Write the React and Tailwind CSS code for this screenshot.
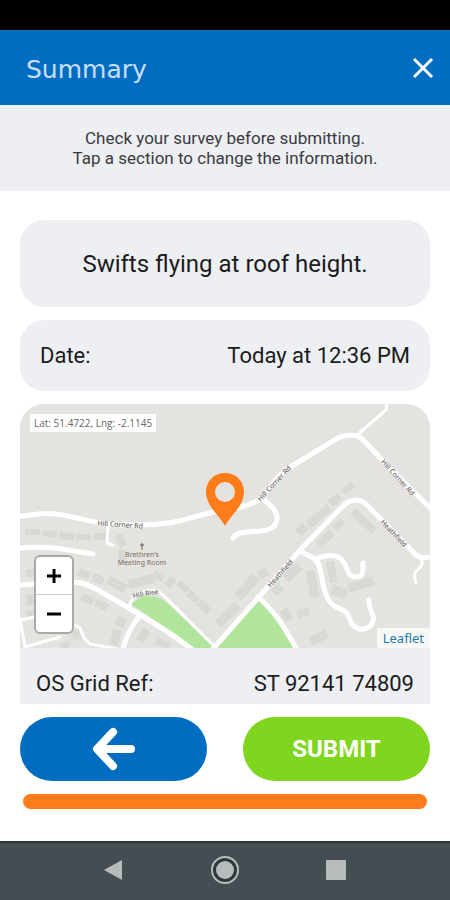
import { useState } from 'react';

const minorRoads = [
  'M337 31 L366 6 L367 -2',
  'M88 122 L87 139 L93 141',
  'M109 203 C111 196 114 191 123 188 C131 185 138 186 143 191 L193 241',
  'M0 216 L15 213 L55 221 L60 224 L64 234 L70 240 L97 245',
  'M0 216 L5 243 L40 233',
  'M402 156 C403 165 397 164 395 169 C394 173 395 176 396 179',
];

const mainRoads = [
  'M-2 112 C12 112 20 108 36 110 C60 113 75 122 123 121 C155 121 170 113 190 109 C215 104 230 103 241 94 C252 82 257 70 272 62 L313 37 C321 31 334 29 341 34 C350 42 355 49 362 56 L413 107',
  'M242 94 C250 101 258 107 257 116 C255 128 240 127 225 128 C219 129 215 130 213 134',
  'M193 245 L238 194 L280 146 L323 102 C330 95 341 94 347 101 L395 150 C400 155 405 154 413 152',
  'M280 147 L295 155 C303 162 300 180 308 195 C314 207 325 202 329 213 C332 224 341 229 350 222 C359 213 348 208 349 196',
  'M296 156 C302 151 313 150 320 154 C329 160 325 173 336 173 C344 173 343 166 343 159',
  'M-2 181 C18 180 35 179 53 178 C62 178 69 181 76 185 L107 203 L140 223 C155 232 162 238 173 246',
  'M238 193 C256 209 265 224 277 246',
  'M-2 144 C15 143 30 143 42 145 L73 150',
  'M118 214 C111 223 106 232 103 245',
];

// x, y, width, height, rotation
const buildings = [
  [5, 125, 15, 6, 2], [23, 127, 14, 6, 5], [39, 129, 15, 7, 5], [56, 130, 15, 6, 6], [74, 129, 14, 7, -2],
  [97, 130, 8, 13, -25], [98, 146, 8, 14, 3],
  [6, 165, 8, 8, 0], [58, 166, 12, 8, 22], [72, 171, 12, 8, 26], [87, 176, 20, 9, 28],
  [6, 190, 9, 12, 0], [6, 206, 12, 8, 0], [61, 191, 13, 8, 25], [75, 197, 13, 8, 25],
  [108, 173, 26, 9, -14], [133, 168, 11, 8, 20], [145, 174, 11, 8, -48],
  [157, 179, 12, 7, 40], [167, 189, 12, 7, 42], [177, 199, 14, 8, 44],
  [196, 211, 13, 9, -46], [205, 202, 15, 9, -46], [213, 178, 28, 10, -47], [238, 165, 10, 9, -40],
  [252, 181, 11, 9, -42], [263, 164, 19, 9, -42], [96, 213, 10, 10, -65], [88, 229, 15, 9, -75],
  [117, 227, 13, 9, -55], [136, 235, 14, 8, 22], [277, 121, 10, 9, -44], [285, 108, 28, 8, -42],
  [309, 92, 12, 8, -40], [322, 81, 13, 7, -40], [296, 131, 18, 8, -42], [313, 117, 11, 7, -42],
  [329, 113, 29, 8, 43], [308, 157, 8, 22, -12], [288, 166, 9, 28, -10], [311, 183, 16, 10, 20],
  [328, 176, 26, 9, -17], [262, 205, 9, 12, -30], [277, 205, 12, 8, -20], [290, 229, 18, 9, -25],
  [40, 238, 10, 6, -20], [52, 226, 8, 10, -20],
];

const roadLabels = [
  { text: 'Hill Corner Rd', x: 100, y: 123, rotate: 4 },
  { text: 'Hill Corner Rd', x: 256, y: 81, rotate: -47 },
  { text: 'Hill Corner Rd', x: 376, y: 75, rotate: 48 },
  { text: 'Heathfield', x: 372, y: 131, rotate: 47 },
  { text: 'Heathfield', x: 262, y: 171, rotate: -48 },
  { text: 'Hill Rise', x: 126, y: 192, rotate: -10 },
];

const MapTiles = () => (
  <svg
    viewBox="0 0 410 244"
    preserveAspectRatio="xMidYMid slice"
    className="block w-full h-61 bg-[#e4e3df]"
    aria-label="Map of the survey location"
  >
    <g fill="#dad8d4">
      {buildings.map(([x, y, w, h, r], i) => (
        <rect key={i} x={x} y={y} width={w} height={h} transform={`rotate(${r} ${x + w / 2} ${y + h / 2})`} />
      ))}
    </g>
    <g fill="#b1e59b">
      <path d="M111 200 L121 193 C127 190 132 194 137 193 L145 197 L193 242 L191 245 L173 245 C155 232 137 217 111 200 Z" />
      <path d="M238 196 L196 245 L275 245 C265 226 256 212 238 196 Z" />
    </g>
    <g fill="none" stroke="#fff" strokeLinecap="round" strokeLinejoin="round">
      {minorRoads.map((d) => (
        <path key={d} d={d} strokeWidth="3" />
      ))}
      {mainRoads.map((d) => (
        <path key={d} d={d} strokeWidth="5" />
      ))}
    </g>
    <g fontFamily="Noto Sans, sans-serif" fontSize="7" fill="#555" stroke="#f4f3f0" strokeWidth="1" paintOrder="stroke" textAnchor="middle">
      {roadLabels.map(({ text, x, y, rotate }) => (
        <text key={`${x}-${y}`} x={x} y={y} transform={`rotate(${rotate} ${x} ${y})`}>{text}</text>
      ))}
    </g>
    <g fontFamily="Noto Sans, sans-serif" fontSize="7" fill="#7d6d61" textAnchor="middle">
      <path d="M122 139 V146 M120 141 H124" stroke="#6b5d52" strokeWidth="1" />
      <text x="122" y="153">Brethren's</text>
      <text x="122" y="161">Meeting Room</text>
    </g>
    <path
      fill="#ff7c1a"
      fillRule="evenodd"
      d="M205 122 C200 112 186 102 186 88 C186 77 194 69 205 69 C216 69 224 77 224 88 C224 102 210 112 205 122 Z M205 78 A10 10 0 1 0 205 98 A10 10 0 1 0 205 78 Z"
    />
  </svg>
);

const App = () => {
  const [survey] = useState({
    description: 'Swifts flying at roof height.',
    date: 'Today at 12:36 PM',
    lat: 51.4722,
    lng: -2.1145,
    gridRef: 'ST 92141 74809',
  });

  return (
    <div className="min-h-screen flex flex-col bg-white font-[Roboto,sans-serif] text-[#1b1c20]">
      <div className="h-[30px] bg-black" />

      <header className="h-[75px] flex items-center justify-between bg-[#006dc1] pl-[26px] pr-4">
        <h1 className="pt-1 font-['DejaVu_Sans',sans-serif] font-normal text-[25px] leading-8 text-[#c9defa]">Summary</h1>
        <button type="button" aria-label="Close" className="text-white">
          <svg viewBox="0 0 22 22" className="size-[22px]" fill="none" stroke="currentColor" strokeWidth="3">
            <path d="M2 2 L20 20 M20 2 L2 20" />
          </svg>
        </button>
      </header>

      <div className="h-[86px] flex flex-col justify-center bg-[#edeff3] text-center text-[17px] leading-5 text-[#3a3b3f]">
        <p>Check your survey before submitting.</p>
        <p>Tap a section to change the information.</p>
      </div>

      <main className="flex flex-col gap-[13px] px-5 pt-[29px]">
        <button type="button" className="h-[87px] rounded-3xl bg-[#edeff3] px-5 text-2xl">
          {survey.description}
        </button>

        <button type="button" className="h-[71px] flex items-center justify-between rounded-3xl bg-[#edeff3] px-5 text-[22px]">
          <span>Date:</span>
          <span>{survey.date}</span>
        </button>

        <section className="overflow-hidden rounded-t-3xl bg-[#edeff3]">
          <div className="relative">
            <MapTiles />
            <div className="absolute left-2.5 top-2.5 bg-white px-1 font-[Open_Sans,sans-serif] text-[10px] leading-[18px] text-[#666]">
              Lat: {survey.lat}, Lng: {survey.lng}
            </div>
            <div className="absolute left-3.5 bottom-3.5 w-10 overflow-hidden rounded-md border-2 border-[#aaa9a6] bg-white text-black">
              <button type="button" aria-label="Zoom in" className="w-full h-[38px] flex items-center justify-center border-b border-[#ccc]">
                <svg viewBox="0 0 14 14" className="size-3.5" stroke="currentColor" strokeWidth="3">
                  <path d="M7 0 V14 M0 7 H14" />
                </svg>
              </button>
              <button type="button" aria-label="Zoom out" className="w-full h-[37px] flex items-center justify-center">
                <svg viewBox="0 0 14 14" className="size-3.5" stroke="currentColor" strokeWidth="3">
                  <path d="M0 7 H14" />
                </svg>
              </button>
            </div>
            <a href="#leaflet" className="absolute right-0 bottom-0 bg-white/75 px-1.5 font-[Noto_Sans,sans-serif] text-[13px] leading-5 text-[#2378aa]">
              Leaflet
            </a>
          </div>
          <div className="flex justify-between px-4 pt-5 pb-1 text-[22px] leading-8">
            <span>OS Grid Ref:</span>
            <span>{survey.gridRef}</span>
          </div>
        </section>
      </main>

      <footer className="flex flex-col gap-[13px] px-5 pt-[13px]">
        <div className="grid grid-cols-2 gap-9">
          <button type="button" aria-label="Back" className="h-16 flex items-center justify-center rounded-full bg-[#006dc1] text-white">
            <svg viewBox="0 0 44 44" className="size-11" fill="none" stroke="currentColor" strokeWidth="8" strokeLinecap="round" strokeLinejoin="round">
              <path d="M21 5 L5 22 L21 39 M6 22 H39" />
            </svg>
          </button>
          <button type="button" className="h-16 rounded-full bg-[#80d51f] text-2xl font-bold text-white">
            SUBMIT
          </button>
        </div>
        <div role="progressbar" aria-label="Survey progress" aria-valuenow={100} className="mx-[3px] h-[15px] rounded-lg bg-[#ff7b1c]" />
      </footer>

      <nav className="mt-auto h-[59px] flex items-center justify-center gap-[81px] border-t-2 border-[#2c353a] bg-[#464d52] pb-[3px] text-[#b6bcbc]">
        <button type="button" aria-label="System back">
          <svg viewBox="0 0 30 30" className="size-[30px]" fill="currentColor">
            <path d="M5 15 L23 5 V25 Z" />
          </svg>
        </button>
        <button type="button" aria-label="Home">
          <svg viewBox="0 0 30 30" className="size-[30px]" fill="currentColor">
            <circle cx="15" cy="15" r="13" fill="#30383c" stroke="currentColor" strokeWidth="2" />
            <circle cx="15" cy="15" r="9" />
          </svg>
        </button>
        <button type="button" aria-label="Recent apps">
          <svg viewBox="0 0 30 30" className="size-[30px]" fill="currentColor">
            <rect x="5" y="5" width="20" height="20" rx="1" />
          </svg>
        </button>
      </nav>
    </div>
  );
};

export default App;
